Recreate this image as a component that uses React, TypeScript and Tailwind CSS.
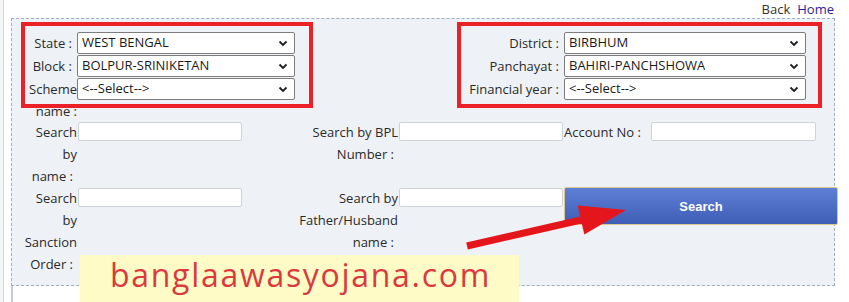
import React from 'react';

const Chevron = () => (
  <svg width="10" height="7" viewBox="0 0 10 7" className="shrink-0">
    <path d="M1.5 1.5 L5 5 L8.5 1.5" fill="none" stroke="#1f1f1f" strokeWidth="1.8" />
  </svg>
);

const FakeSelect = ({ value, width }: { value: string; width: string }) => (
  <div
    className={`${width} h-[22px] shrink-0 flex items-center justify-between bg-white border border-[#7d7d7d] rounded-[2px] pl-[4px] pr-[6px] text-[13px] text-[#1a1a1a]`}
  >
    <span className="truncate">{value}</span>
    <Chevron />
  </div>
);

const Field = ({ width }: { width: string }) => (
  <div className={`${width} h-[19px] mt-[1px] shrink-0 bg-white border border-[#cdd2d7] rounded-[2px]`} />
);

const Lines = ({ lines, width }: { lines: string[]; width: string }) => (
  <div className={`${width} shrink-0 text-right text-[13px] leading-[22px] text-[#2a2a2a]`}>
    {lines.map((l, i) => (
      <div key={i} className={l.endsWith(':') ? 'pr-[5px]' : 'pr-[1px]'}>
        {l}
      </div>
    ))}
  </div>
);

export default function App() {
  return (
    <div className="relative w-[849px] h-[302px] overflow-hidden bg-[#f4f6f8] font-['Open_Sans',sans-serif]">
      <div className="ml-[3px] h-full border-l border-[#d3d7db] bg-white">
        {/* top links */}
        <div className="h-[18px] flex justify-end items-center gap-[7px] pr-[15px] text-[13px] leading-[17px]">
          <span className="text-[#333]">Back</span>
          <span className="text-[#2b1d9c]">Home</span>
        </div>

        {/* form panel */}
        <div className="ml-[7px] w-[824px] border border-dashed border-[#9fb0b8] bg-[#eef2f7] pb-[10px]">
          <div className="mt-[3px] flex">
            <div className="ml-[9px] w-[292px] border-4 border-[#ec2027] pt-[6px] pb-[4px] flex flex-col gap-[1px]">
              <div className="flex">
                <Lines lines={['State :']} width="w-[52px]" />
                <FakeSelect value="WEST BENGAL" width="w-[218px]" />
              </div>
              <div className="flex">
                <Lines lines={['Block :']} width="w-[52px]" />
                <FakeSelect value="BOLPUR-SRINIKETAN" width="w-[218px]" />
              </div>
              <div className="flex h-[22px]">
                <div className="w-[52px] shrink-0 text-right text-[13px] leading-[22px] text-[#2a2a2a]">
                  <div>Scheme</div>
                  <div>name :</div>
                </div>
                <FakeSelect value="<--Select-->" width="w-[218px]" />
              </div>
            </div>

            <div className="ml-[144px] w-[365px] border-4 border-[#ec2027] pt-[6px] pb-[4px] flex flex-col gap-[1px]">
              <div className="flex">
                <Lines lines={['District :']} width="w-[103px]" />
                <FakeSelect value="BIRBHUM" width="w-[242px]" />
              </div>
              <div className="flex">
                <Lines lines={['Panchayat :']} width="w-[103px]" />
                <FakeSelect value="BAHIRI-PANCHSHOWA" width="w-[242px]" />
              </div>
              <div className="flex">
                <Lines lines={['Financial year :']} width="w-[103px]" />
                <FakeSelect value="<--Select-->" width="w-[242px]" />
              </div>
            </div>
          </div>

          <div className="mt-[13px]">
            <div className="flex items-start">
              <Lines lines={['Search', 'by', 'name :']} width="w-[66px]" />
              <Field width="w-[164px]" />
              <Lines lines={['Search by BPL', 'Number :']} width="w-[157px]" />
              <Field width="w-[164px]" />
              <div className="w-[88px] shrink-0 pl-[1px] text-[13px] leading-[22px] text-[#2a2a2a]">Account No :</div>
              <Field width="w-[165px]" />
            </div>
            <div className="flex items-start">
              <Lines lines={['Search', 'by', 'Sanction', 'Order :']} width="w-[66px]" />
              <Field width="w-[164px]" />
              <Lines lines={['Search by', 'Father/Husband', 'name :']} width="w-[157px]" />
              <Field width="w-[164px]" />
              <button className="ml-[1px] w-[274px] h-[38px] shrink-0 rounded-[2px] border border-[#d8c98a] bg-gradient-to-b from-[#5f7fd6] to-[#3f5db5] pt-[2px] text-white text-[13px] font-bold font-['Liberation_Sans',sans-serif]">
                Search
              </button>
            </div>
          </div>
        </div>

        <div className="ml-[7px] mr-[8px] h-[20px] border-l-2 border-[#c8ccd1] bg-white" />
      </div>

      {/* watermark */}
      <div className="absolute left-[80px] top-[255px] w-[439px] h-[47px] bg-[#fffbc6] pl-[30px] text-[32px] leading-[40px] font-medium tracking-[1.7px] text-[#d93a3d] whitespace-nowrap">
        banglaawasyojana.com
      </div>

      {/* red arrow */}
      <svg className="absolute left-0 top-0" width="849" height="302" viewBox="0 0 849 302">
        <polygon points="467.8,249.4 466.2,242.6 580.2,216.6 581.8,223.4" fill="#e5161b" />
        <polygon points="577.7,205.4 626,210 584.3,234.6" fill="#e5161b" />
      </svg>
    </div>
  );
}
